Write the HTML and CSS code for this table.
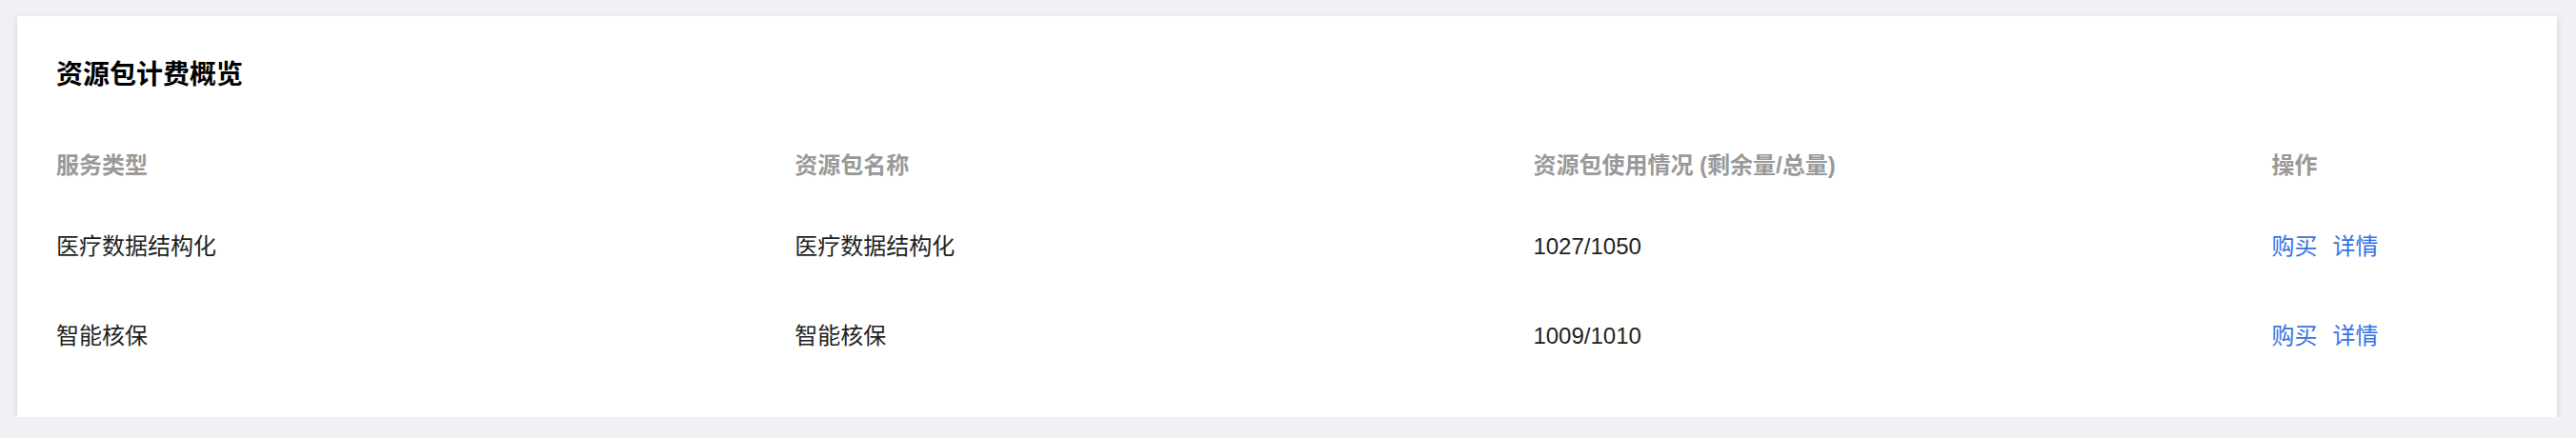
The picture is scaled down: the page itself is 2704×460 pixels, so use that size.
FILE: index.html
```html
<!DOCTYPE html>
<html lang="zh-CN">
<head>
  <meta charset="UTF-8" />
  <meta name="viewport" content="width=device-width, initial-scale=1.0" />
  <title>资源包计费概览</title>
  <link rel="stylesheet" href="styles.css">
</head>
<body>
  <!-- Overview card -->
  <div class="card">
    <div class="card-title">资源包计费概览</div>

    <div class="table">
      <div class="row head">
        <div class="cell">服务类型</div>
        <div class="cell">资源包名称</div>
        <div class="cell">资源包使用情况 (剩余量/总量)</div>
        <div class="cell">操作</div>
      </div>
      <div class="row">
        <div class="cell">医疗数据结构化</div>
        <div class="cell">医疗数据结构化</div>
        <div class="cell">1027/1050</div>
        <div class="cell actions"><a href="#">购买</a><a href="#">详情</a></div>
      </div>
      <div class="row">
        <div class="cell">智能核保</div>
        <div class="cell">智能核保</div>
        <div class="cell">1009/1010</div>
        <div class="cell actions"><a href="#">购买</a><a href="#">详情</a></div>
      </div>
    </div>
  </div>
</body>
</html>
```

FILE: styles.css
```css
body {
  margin: 0;
  padding: 17px 20px 0 18px;
  background: #f0f1f5;
  font-family: "Liberation Sans", "Noto Sans CJK SC", sans-serif;
  font-size: 24px;
  color: #1f1f1f;
}

.card {
  background: #fff;
  padding: 42px 41px 38px 41px;
  box-shadow: 0 2px 6px rgba(0, 0, 0, 0.14);
}

.card-title {
  font-size: 28px;
  font-weight: bold;
  line-height: 40px;
  color: #000;
  margin-bottom: 37px;
}

.row {
  display: grid;
  grid-template-columns: 3fr 3fr 3fr 1fr;
  align-items: center;
  height: 94px;
}

.row.head {
  height: 76px;
  color: #999;
  font-weight: 600;
}

.cell {
  line-height: 30px;
  white-space: nowrap;
}

.actions a {
  color: #3672e3;
  text-decoration: none;
  margin-right: 16px;
}
```
